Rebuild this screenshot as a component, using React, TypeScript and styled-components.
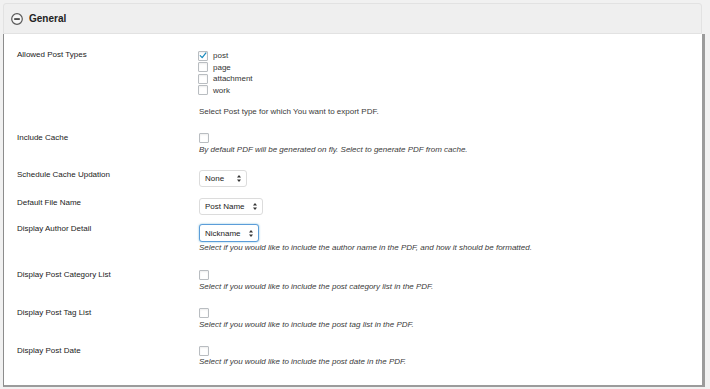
import React from 'react';
import styled, { createGlobalStyle, css } from 'styled-components';

const GlobalStyle = createGlobalStyle`
  body {
    margin: 0;
    background: #f1f1f1;
    font-family: "Liberation Sans", Arial, Helvetica, sans-serif;
  }
`;

const postTypes = [
  { name: 'post', checked: true },
  { name: 'page', checked: false },
  { name: 'attachment', checked: false },
  { name: 'work', checked: false },
];

function CheckMark() {
  return (
    <svg width="9" height="9" viewBox="0 0 9 9">
      <path d="M1.4 4.6 L3.6 6.9 L7.8 1.6" fill="none" stroke="#1e8cbe" strokeWidth="1.4" strokeLinecap="round" strokeLinejoin="round" />
    </svg>
  );
}

function SelectArrows() {
  return (
    <svg width="4" height="7" viewBox="0 0 4 7">
      <path d="M2 0 L4 2.6 L0 2.6 Z" fill="#333" />
      <path d="M0 4.4 L4 4.4 L2 7 Z" fill="#333" />
    </svg>
  );
}

function Checkbox({ checked = false }: { checked?: boolean }) {
  return <Box>{checked && <CheckMark />}</Box>;
}

interface SelectProps {
  value: string;
  width: number;
  focused?: boolean;
}

function Select({ value, width, focused = false }: SelectProps) {
  return (
    <SelectBox $width={width} $focused={focused}>
      <span>{value}</span>
      <SelectArrows />
    </SelectBox>
  );
}

export default function App() {
  return (
    <Page>
      <GlobalStyle />
      <SectionHeader>
        <svg width="12" height="12" viewBox="0 0 12 12">
          <circle cx="6" cy="6" r="5.3" fill="#f7f7f7" stroke="#5a5a5a" strokeWidth="1.2" />
          <rect x="3.2" y="5.3" width="5.6" height="1.5" fill="#222" />
        </svg>
        General
      </SectionHeader>
      <Panel>
        <Row $pt={8} $pb={8}>
          <Label>Allowed Post Types</Label>
          <Field>
            <CheckList>
              {postTypes.map((t) => (
                <CheckItem key={t.name}>
                  <Checkbox checked={t.checked} />
                  {t.name}
                </CheckItem>
              ))}
            </CheckList>
            <Description $gap={10}>Select Post type for which You want to export PDF.</Description>
          </Field>
        </Row>

        <Row $pt={8} $pb={8}>
          <Label>Include Cache</Label>
          <Field>
            <Checkbox />
            <Description $gap={1} $italic>
              By default PDF will be generated on fly. Select to generate PDF from cache.
            </Description>
          </Field>
        </Row>

        <Row $pt={7} $pb={5}>
          <Label>Schedule Cache Updation</Label>
          <Field>
            <Select value="None" width={48} />
          </Field>
        </Row>

        <Row $pt={6} $pb={5}>
          <Label>Default File Name</Label>
          <Field>
            <Select value="Post Name" width={64} />
          </Field>
        </Row>

        <Row $pt={4} $pb={8}>
          <Label>Display Author Detail</Label>
          <Field>
            <Select value="Nickname" width={60} focused />
            <Description $gap={0} $italic>
              Select if you would like to include the author name in the PDF, and how it should be formatted.
            </Description>
          </Field>
        </Row>

        <Row $pt={9} $pb={8}>
          <Label>Display Post Category List</Label>
          <Field>
            <Checkbox />
            <Description $gap={1} $italic>
              Select if you would like to include the post category list in the PDF.
            </Description>
          </Field>
        </Row>

        <Row $pt={8} $pb={8}>
          <Label>Display Post Tag List</Label>
          <Field>
            <Checkbox />
            <Description $gap={1} $italic>
              Select if you would like to include the post tag list in the PDF.
            </Description>
          </Field>
        </Row>

        <Row $pt={8} $pb={8}>
          <Label>Display Post Date</Label>
          <Field>
            <Checkbox />
            <Description $gap={0} $italic>
              Select if you would like to include the post date in the PDF.
            </Description>
          </Field>
        </Row>
      </Panel>
    </Page>
  );
}

const Page = styled.div`
  box-sizing: border-box;
  width: 710px;
  padding: 3px 5px 2px 3px;
`;

const SectionHeader = styled.header`
  box-sizing: border-box;
  display: flex;
  align-items: center;
  gap: 6px;
  width: calc(100% - 3px);
  height: 31px;
  padding-left: 7px;
  border: 1px solid #e2e2e2;
  border-radius: 3px 3px 0 0;
  background: #efefef;
  font-size: 10px;
  font-weight: bold;
  color: #222;
`;

const Panel = styled.section`
  padding: 8px 0 10px;
  background: #fff;
  border-left: 1px solid #8c8c8c;
  border-right: 3px solid #9b9b9b;
  border-bottom: 2px solid #9b9b9b;
`;

const Row = styled.div<{ $pt: number; $pb: number }>`
  display: grid;
  grid-template-columns: 182px 1fr;
  padding: ${({ $pt }) => $pt}px 13px ${({ $pb }) => $pb}px;
`;

const Label = styled.div`
  font-size: 8px;
  line-height: 9px;
  color: #222;
`;

const Field = styled.div`
  display: flex;
  flex-direction: column;
  align-items: flex-start;
`;

const CheckList = styled.div`
  display: flex;
  flex-direction: column;
  margin-left: -1px;
`;

const CheckItem = styled.label`
  display: flex;
  align-items: center;
  gap: 5px;
  height: 11.5px;
  font-size: 8px;
  color: #333;
`;

const Box = styled.span`
  box-sizing: border-box;
  display: flex;
  align-items: center;
  justify-content: center;
  width: 10px;
  height: 10px;
  border: 1px solid #b9bdc1;
  border-radius: 1px;
  background: #fff;
  box-shadow: inset 0 1px 2px rgba(0, 0, 0, 0.07);
`;

const Description = styled.p<{ $gap: number; $italic?: boolean }>`
  margin: ${({ $gap }) => $gap}px 0 0;
  font-size: 8px;
  line-height: 11px;
  color: #3a3a3a;
  white-space: nowrap;
  ${({ $italic }) =>
    $italic &&
    css`
      font-style: italic;
    `}
`;

const SelectBox = styled.div<{ $width: number; $focused: boolean }>`
  box-sizing: border-box;
  display: flex;
  align-items: center;
  justify-content: space-between;
  width: ${({ $width }) => $width}px;
  height: 17px;
  padding: 0 5px;
  border: 1px solid #dcdcdc;
  border-radius: 3px;
  background: #fff;
  font-size: 8px;
  color: #222;

  ${({ $focused }) =>
    $focused &&
    css`
      height: 18px;
      border-color: #5b9dd9;
      box-shadow: 0 0 2px rgba(30, 140, 190, 0.6);
    `}
`;
